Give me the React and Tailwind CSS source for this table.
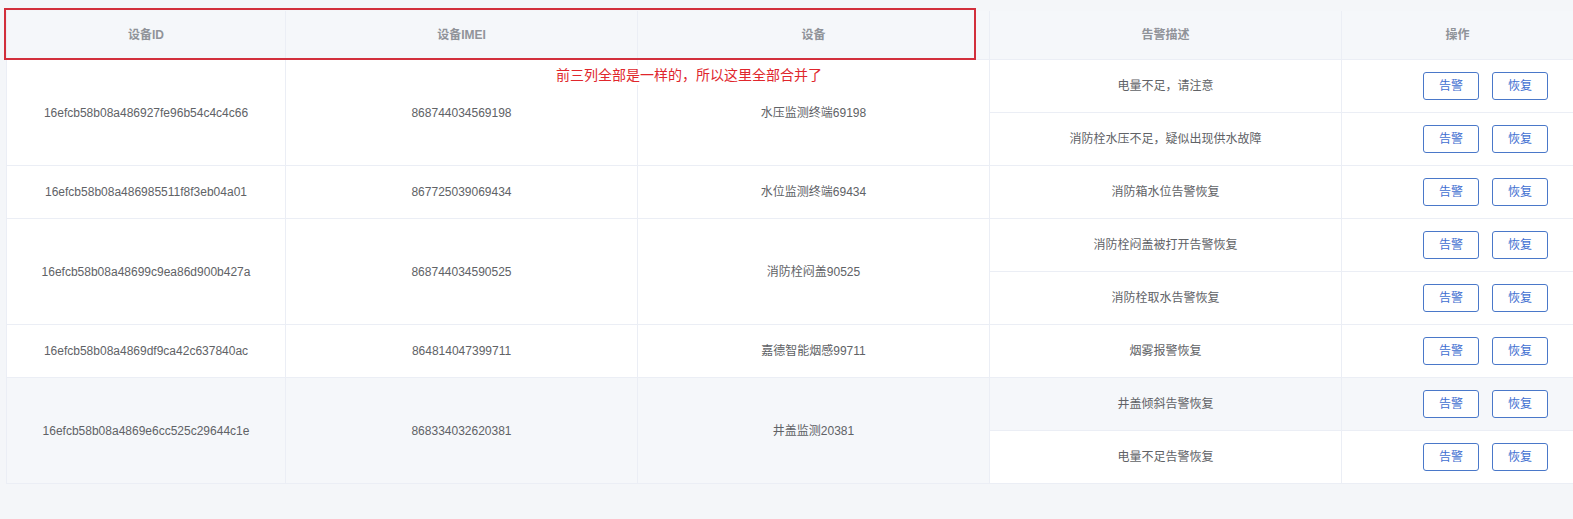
const rows = [
    {
        id: "16efcb58b08a486927fe96b54c4c4c66",
        imei: "868744034569198",
        device: "水压监测终端69198",
        alarms: ["电量不足，请注意", "消防栓水压不足，疑似出现供水故障"],
    },
    {
        id: "16efcb58b08a486985511f8f3eb04a01",
        imei: "867725039069434",
        device: "水位监测终端69434",
        alarms: ["消防箱水位告警恢复"],
    },
    {
        id: "16efcb58b08a48699c9ea86d900b427a",
        imei: "868744034590525",
        device: "消防栓闷盖90525",
        alarms: ["消防栓闷盖被打开告警恢复", "消防栓取水告警恢复"],
    },
    {
        id: "16efcb58b08a4869df9ca42c637840ac",
        imei: "864814047399711",
        device: "嘉德智能烟感99711",
        alarms: ["烟雾报警恢复"],
    },
    {
        id: "16efcb58b08a4869e6cc525c29644c1e",
        imei: "868334032620381",
        device: "井盖监测20381",
        alarms: ["井盖倾斜告警恢复", "电量不足告警恢复"],
        hover: true,
    },
];

const cell = "flex items-center justify-center border-b border-r border-[#ebeef5] text-[12px] text-[#606266]";

const Ops = ({ bg }) => (
    <div className={`flex items-center gap-[13px] pl-[81px] border-b border-[#ebeef5] ${bg}`}>
        <button className="h-[28px] w-[56px] rounded-[3px] border border-[#4a78c9] bg-white text-[12px] text-[#3f6fd1]">告警</button>
        <button className="h-[28px] w-[56px] rounded-[3px] border border-[#4a78c9] bg-white text-[12px] text-[#3f6fd1]">恢复</button>
    </div>
);

const App = () => {
    return (
        <div
            className="relative min-h-[519px] w-full bg-[#f4f6f9] pt-[11px] pl-[6px]"
            style={{ fontFamily: '"Liberation Sans", "Noto Sans CJK SC", sans-serif' }}
        >
            <div className="grid grid-cols-[279px_352px_352px_352px_1fr] grid-rows-[49px] auto-rows-[53px] border-l border-[#ebeef5]">
                {["设备ID", "设备IMEI", "设备", "告警描述"].map((h) => (
                    <div key={h} className="flex items-center justify-center border-b border-r border-[#ebeef5] bg-[#f5f7fa] text-[12px] font-bold text-[#909399]">
                        {h}
                    </div>
                ))}
                <div className="flex items-center justify-center border-b border-[#ebeef5] bg-[#f5f7fa] text-[12px] font-bold text-[#909399]">
                    操作
                </div>

                {rows.map((r) => {
                    const span = r.alarms.length === 2 ? "row-span-2" : "";
                    const bg = r.hover ? "bg-[#f5f7fa]" : "bg-white";
                    return [
                        <div key={r.id + "a"} className={`${cell} ${span} ${bg}`}>{r.id}</div>,
                        <div key={r.id + "b"} className={`${cell} ${span} ${bg}`}>{r.imei}</div>,
                        <div key={r.id + "c"} className={`${cell} ${span} ${bg}`}>{r.device}</div>,
                        ...r.alarms.map((a, i) => {
                            const rowBg = r.hover && i === 0 ? "bg-[#f5f7fa]" : "bg-white";
                            return [
                                <div key={r.id + "d" + i} className={`${cell} ${rowBg}`}>{a}</div>,
                                <Ops key={r.id + "e" + i} bg={rowBg} />,
                            ];
                        }),
                    ];
                })}
            </div>

            {/* annotation */}
            <div className="pointer-events-none absolute left-[4px] top-[8px] h-[52px] w-[972px] border-2 border-[#d22f3c]" />
            <div className="absolute left-[556px] top-[65px] bg-white text-[14px] leading-[20px] text-[#e0262c]">
                前三列全部是一样的，所以这里全部合并了
            </div>
        </div>
    );
};

export default App;
